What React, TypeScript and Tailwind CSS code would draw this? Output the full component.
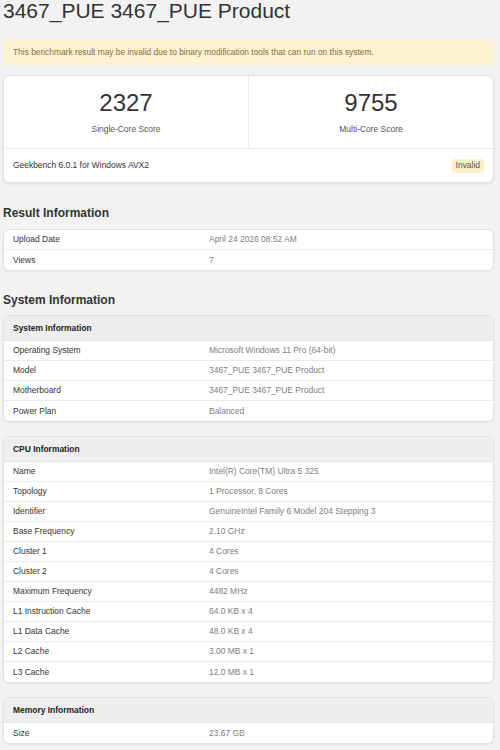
import React from "react";

const font = { fontFamily: '"Liberation Sans", Arial, sans-serif' };

type Row = [string, string];

function Card({ title, rows }: { title?: string; rows: Row[] }) {
  return (
    <div className="bg-white border border-[#e2e2e2] rounded-[6px] shadow-[0_1px_2px_rgba(0,0,0,0.06)] overflow-hidden">
      {title && (
        <div className="h-[25px] bg-[#eeeeee] border-b border-[#e6e6e6] flex items-center pl-[9px] text-[8.45px] font-bold text-[#222]">
          {title}
        </div>
      )}
      {rows.map(([k, v], i) => (
        <div
          key={k}
          className={
            "flex items-center h-[20px] text-[8.45px] " +
            (i < rows.length - 1 ? "border-b border-[#ebebeb]" : "")
          }
        >
          <div className="w-[205px] pl-[9px] text-[#333]">{k}</div>
          <div className="text-[#808080]">{v}</div>
        </div>
      ))}
    </div>
  );
}

export default function App() {
  return (
    <div style={font} className="bg-[#f2f2f2] min-h-[750px] pl-[3px] pr-[6px] overflow-hidden">
      <h1 className="text-[21px] leading-[22px] text-[#333] font-normal">3467_PUE 3467_PUE Product</h1>
      <div className="mt-[18px] h-[25px] bg-[#fcf2d1] rounded-[2px] flex items-center pl-[10px] text-[8.4px] text-[#8a6d3b]">
        This benchmark result may be invalid due to binary modification tools that can run on this system.
      </div>
      <div className="mt-[10px] bg-white border border-[#e2e2e2] rounded-[6px] shadow-[0_1px_3px_rgba(0,0,0,0.08)]">
        <div className="flex h-[73px] border-b border-[#ebebeb]">
          <div className="flex-1 flex flex-col items-center border-r border-[#ebebeb]">
            <div className="mt-[15px] text-[24px] leading-[24px] text-[#333]">2327</div>
            <div className="mt-[8px] text-[8.45px] text-[#555]">Single-Core Score</div>
          </div>
          <div className="flex-1 flex flex-col items-center">
            <div className="mt-[15px] text-[24px] leading-[24px] text-[#333]">9755</div>
            <div className="mt-[8px] text-[8.45px] text-[#555]">Multi-Core Score</div>
          </div>
        </div>
        <div className="h-[33px] flex items-center justify-between pl-[9px] pr-[9px]">
          <div className="text-[8.45px] text-[#333]">Geekbench 6.0.1 for Windows AVX2</div>
          <div className="h-[14px] px-[4px] bg-[#fcf0c6] rounded-[3px] flex items-center text-[8.45px] text-[#555]">
            Invalid
          </div>
        </div>
      </div>

      <h2 className="mt-[22px] text-[12px] leading-[16px] font-bold text-[#333]">Result Information</h2>
      <div className="mt-[8px]">
        <Card rows={[["Upload Date", "April 24 2026 08:52 AM"], ["Views", "7"]]} />
      </div>

      <h2 className="mt-[21px] text-[12px] leading-[16px] font-bold text-[#333]">System Information</h2>
      <div className="mt-[7px] flex flex-col gap-[14px]">
        <Card
          title="System Information"
          rows={[
            ["Operating System", "Microsoft Windows 11 Pro (64-bit)"],
            ["Model", "3467_PUE 3467_PUE Product"],
            ["Motherboard", "3467_PUE 3467_PUE Product"],
            ["Power Plan", "Balanced"],
          ]}
        />
        <Card
          title="CPU Information"
          rows={[
            ["Name", "Intel(R) Core(TM) Ultra 5 325"],
            ["Topology", "1 Processor, 8 Cores"],
            ["Identifier", "GenuineIntel Family 6 Model 204 Stepping 3"],
            ["Base Frequency", "2.10 GHz"],
            ["Cluster 1", "4 Cores"],
            ["Cluster 2", "4 Cores"],
            ["Maximum Frequency", "4482 MHz"],
            ["L1 Instruction Cache", "64.0 KB x 4"],
            ["L1 Data Cache", "48.0 KB x 4"],
            ["L2 Cache", "3.00 MB x 1"],
            ["L3 Cache", "12.0 MB x 1"],
          ]}
        />
        <Card title="Memory Information" rows={[["Size", "23.67 GB"]]} />
      </div>
    </div>
  );
}
